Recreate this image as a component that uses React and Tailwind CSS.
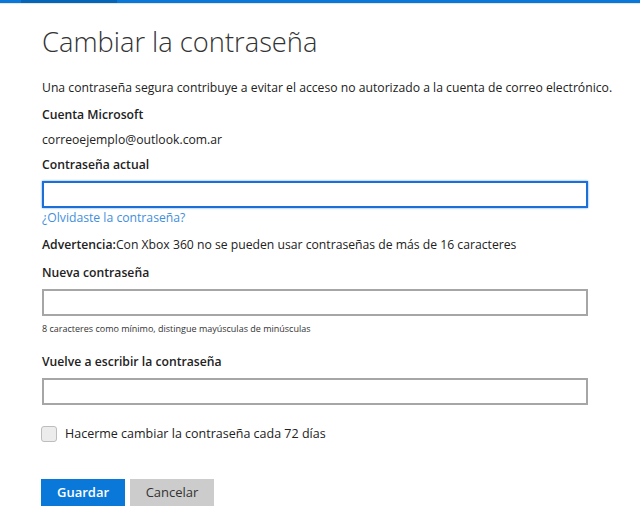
import React, { useState } from 'react';

const font = { fontFamily: '"Open Sans", "Noto Sans", sans-serif' };

const Field = ({ label, focused, children }) => (
  <div>
    <label className="block text-[12.2px] font-semibold text-[#222] leading-[18px]">{label}</label>
    <input
      type="password"
      autoFocus={focused}
      className={
        'mt-[7px] block w-[546px] h-[27px] px-2 bg-white outline-none border-2 ' +
        (focused ? 'border-[#1b6fd6] shadow-[0_0_2px_#5aa0ee]' : 'border-[#a6a6a6]')
      }
    />
    {children}
  </div>
);

export default function App() {
  const [remind, setRemind] = useState(false);

  return (
    <div className="min-h-screen w-[640px] bg-white text-[#222]" style={font}>
      {/* top bar */}
      <div className="flex h-[3px] bg-[#0a78d8]">
        <div className="ml-[21px] w-[96px] bg-[#0565b8]" />
      </div>
      <div className="h-px bg-[#e6e6e6]" />

      <div className="pl-[42px] pt-[20px]">
        <h1 className="text-[27.3px] font-light text-[#333] leading-[36px]">
          Cambiar la contraseña
        </h1>

        <p className="mt-[19px] text-[12.2px] leading-[18px] text-[#222] whitespace-nowrap">
          Una contraseña segura contribuye a evitar el acceso no autorizado a la cuenta de correo electrónico.
        </p>

        <p className="mt-[9px] text-[12.2px] font-semibold leading-[18px]">Cuenta Microsoft</p>
        <p className="mt-[7px] text-[12.2px] leading-[18px]">correoejemplo@outlook.com.ar</p>

        <div className="mt-[7px]">
          <Field label="Contraseña actual" focused>
            <a href="#" className="block mt-[1px] text-[12.2px] leading-[18px] text-[#3f8fdc]">
              ¿Olvidaste la contraseña?
            </a>
          </Field>
        </div>

        <p className="mt-[9px] text-[12.2px] leading-[18px]">
          <span className="font-semibold">Advertencia:</span>Con Xbox 360 no se pueden usar contraseñas de más de 16 caracteres
        </p>

        <div className="mt-[10px]">
          <Field label="Nueva contraseña">
            <p className="mt-[6px] text-[9px] leading-[14px] text-[#333]">
              8 caracteres como mínimo, distingue mayúsculas de minúsculas
            </p>
          </Field>
        </div>

        <div className="mt-[17px]">
          <Field label="Vuelve a escribir la contraseña" />
        </div>

        <label className="mt-[20px] flex items-center gap-[8px] cursor-pointer -ml-[1px]">
          <input
            type="checkbox"
            checked={remind}
            onChange={(e) => setRemind(e.target.checked)}
            className="appearance-none w-[16px] h-[16px] rounded-[3px] border border-[#bdbdbd] bg-[#ececec] checked:bg-[#0a78d8]"
          />
          <span className="text-[12.5px] leading-[18px]">Hacerme cambiar la contraseña cada 72 días</span>
        </label>

        <div className="mt-[36px] flex gap-[5px] -ml-[1px]">
          <button className="w-[84px] h-[27px] bg-[#0a78d8] text-white text-[13px] font-semibold">
            Guardar
          </button>
          <button className="w-[84px] h-[27px] bg-[#cccccc] text-[#333] text-[13px]">
            Cancelar
          </button>
        </div>
      </div>
    </div>
  );
}
